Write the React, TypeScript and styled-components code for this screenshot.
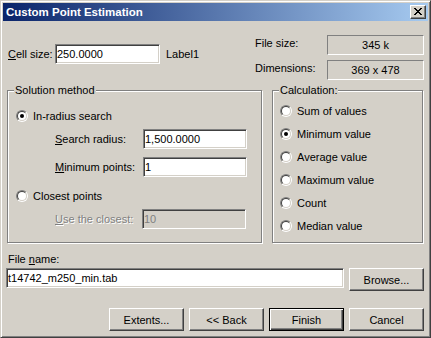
import React from "react";
import styled, { createGlobalStyle } from "styled-components";

// classic win2k palette
const FACE = "#D4D0C8";
const SHADOW = "#808080";
const DARK = "#404040";
const FONT = `"Liberation Sans", Arial, sans-serif`;

const GlobalStyle = createGlobalStyle`
    html, body {
        margin: 0;
        padding: 0;
        background: ${FACE};
    }
    body {
        font-family: ${FONT};
        font-size: 11px;
        line-height: 13px;
        color: #000;
    }
    u {
        text-decoration: underline;
    }
`;

const calcOptions = [
    { label: "Sum of values", checked: false },
    { label: "Minimum value", checked: true },
    { label: "Average value", checked: false },
    { label: "Maximum value", checked: false },
    { label: "Count", checked: false },
    { label: "Median value", checked: false },
];

const CloseGlyph = () => (
    <svg width="8" height="7" viewBox="0 0 8 7" shapeRendering="crispEdges">
        <path d="M0 0h2v1h-2z M6 0h2v1h-2z M1 1h2v1h-2z M5 1h2v1h-2z M2 2h4v1h-4z M3 3h2v1h-2z M2 4h4v1h-4z M1 5h2v1h-2z M5 5h2v1h-2z M0 6h2v1h-2z M6 6h2v1h-2z" fill="#000" />
    </svg>
);

const Radio: React.FC<{ checked?: boolean; label: string }> = ({ checked, label }) => (
    <RadioRow>
        <RadioOuter>
            <RadioInner $checked={!!checked} />
        </RadioOuter>
        <span>{label}</span>
    </RadioRow>
);

const App: React.FC = () => {
    return (
        <>
            <GlobalStyle />
            <Window>
                <TitleBar>
                    <TitleText>Custom Point Estimation</TitleText>
                    <CloseButton>
                        <CloseGlyph />
                    </CloseButton>
                </TitleBar>

                <Client>
                    <TopRow>
                        <CellField>
                            <FieldLabel $width={49} $indent={2}>
                                <u>C</u>ell size:
                            </FieldLabel>
                            <TextBox $width={105} readOnly value="250.0000" />
                            <PlainLabel>Label1</PlainLabel>
                        </CellField>
                        <InfoGrid>
                            <InfoLabel>File size:</InfoLabel>
                            <InfoBox>345 k</InfoBox>
                            <InfoLabel>Dimensions:</InfoLabel>
                            <InfoBox>369 x 478</InfoBox>
                        </InfoGrid>
                    </TopRow>

                    <GroupsRow>
                        <GroupBox $padTop={17} $padLeft={8}>
                            <Legend>Solution method</Legend>
                            <Radio checked label="In-radius search" />
                            <FieldRow $gap={5}>
                                <FieldLabel $width={88}>
                                    <u>S</u>earch radius:
                                </FieldLabel>
                                <TextBox $width={104} readOnly value="1,500.0000" />
                            </FieldRow>
                            <FieldRow $gap={8}>
                                <FieldLabel $width={88}>
                                    <u>M</u>inimum points:
                                </FieldLabel>
                                <TextBox $width={104} readOnly value="1" />
                            </FieldRow>
                            <Spacer $h={11} />
                            <Radio label="Closest points" />
                            <FieldRow $gap={5}>
                                <FieldLabel $width={87} $disabled>
                                    <u>U</u>se the closest:
                                </FieldLabel>
                                <TextBox $width={104} $disabled readOnly value="10" />
                            </FieldRow>
                        </GroupBox>

                        <GroupBox $padTop={12} $padLeft={7}>
                            <Legend>Calculation:</Legend>
                            <RadioList>
                                {calcOptions.map(o => (
                                    <Radio key={o.label} checked={o.checked} label={o.label} />
                                ))}
                            </RadioList>
                        </GroupBox>
                    </GroupsRow>

                    <FileSection>
                        <FieldLabel $indent={2}>
                            File <u>n</u>ame:
                        </FieldLabel>
                        <FileRow>
                            <TextBox $width={338} readOnly value="t14742_m250_min.tab" />
                            <Button>Browse...</Button>
                        </FileRow>
                    </FileSection>

                    <ButtonRow>
                        <Button>Extents...</Button>
                        <Button>&lt;&lt; Back</Button>
                        <Button $default>Finish</Button>
                        <Button>Cancel</Button>
                    </ButtonRow>
                </Client>
            </Window>
        </>
    );
};

const Window = styled.div`
    box-sizing: border-box;
    width: 431px;
    height: 338px;
    background: ${FACE};
    border: 1px solid;
    border-color: ${FACE} ${DARK} ${DARK} ${FACE};
    box-shadow: inset 1px 1px #fff, inset -1px -1px ${SHADOW};
    padding: 2px;
    display: flex;
    flex-direction: column;
`;

const TitleBar = styled.div`
    height: 18px;
    flex: none;
    display: flex;
    align-items: center;
    justify-content: space-between;
    padding: 0 2px 0 3px;
    background: linear-gradient(to right, #0A246A, #A6CAF0);
`;

const TitleText = styled.span`
    color: #fff;
    font-weight: bold;
    font-size: 11.5px;
`;

const CloseButton = styled.div`
    box-sizing: border-box;
    width: 16px;
    height: 14px;
    background: ${FACE};
    border: 1px solid;
    border-color: #fff ${DARK} ${DARK} #fff;
    box-shadow: inset -1px -1px ${SHADOW};
    display: flex;
    align-items: center;
    justify-content: center;
    padding: 0 1px 1px 0;
`;

const Client = styled.div`
    flex: 1;
    padding: 0 4px 0 3px;
    display: flex;
    flex-direction: column;
`;

const TopRow = styled.div`
    display: flex;
    align-items: flex-start;
    margin-top: 14px;
    height: 45px;
`;

const CellField = styled.div`
    display: flex;
    align-items: center;
    margin-top: 9px;
`;

const FieldLabel = styled.label<{ $width?: number; $indent?: number; $disabled?: boolean }>`
    box-sizing: border-box;
    display: block;
    flex: none;
    width: ${p => (p.$width ? `${p.$width}px` : "auto")};
    padding-left: ${p => p.$indent || 0}px;
    color: ${p => (p.$disabled ? SHADOW : "#000")};
    text-shadow: ${p => (p.$disabled ? "1px 1px #fff" : "none")};
`;

const PlainLabel = styled.span`
    margin-left: 6px;
`;

const TextBox = styled.input<{ $width: number; $disabled?: boolean }>`
    box-sizing: border-box;
    width: ${p => p.$width}px;
    height: 20px;
    margin: 0;
    padding: 0 1px;
    font-family: ${FONT};
    font-size: 11px;
    color: ${p => (p.$disabled ? SHADOW : "#000")};
    background: ${p => (p.$disabled ? FACE : "#fff")};
    border: 1px solid;
    border-color: ${SHADOW} #fff #fff ${SHADOW};
    box-shadow: inset 1px 1px ${DARK}, inset -1px -1px ${FACE};
    outline: none;
`;

const InfoGrid = styled.div`
    margin-left: auto;
    display: grid;
    grid-template-columns: 72px 97px;
    grid-auto-rows: 20px;
    row-gap: 5px;
`;

const InfoLabel = styled.span`
    padding-top: 2px;
`;

const InfoBox = styled.div`
    box-sizing: border-box;
    border: 1px solid;
    border-color: ${SHADOW} #fff #fff ${SHADOW};
    display: flex;
    align-items: center;
    justify-content: center;
`;

const GroupsRow = styled.div`
    display: grid;
    grid-template-columns: 255px 151px;
    column-gap: 10px;
    height: 153px;
    margin: 10px 0 0 1px;
`;

const GroupBox = styled.div<{ $padTop: number; $padLeft: number }>`
    position: relative;
    box-sizing: border-box;
    border: 1px solid ${SHADOW};
    box-shadow: inset 1px 1px #fff, 1px 1px #fff;
    padding: ${p => p.$padTop}px 0 0 ${p => p.$padLeft}px;
    display: flex;
    flex-direction: column;
`;

// sits on top of the etched frame line
const Legend = styled.span`
    position: absolute;
    top: -7px;
    left: 6px;
    padding: 0 1px;
    background: ${FACE};
`;

const RadioList = styled.div`
    display: flex;
    flex-direction: column;
    gap: 7px;
`;

const RadioRow = styled.div`
    display: flex;
    align-items: center;
    gap: 5px;
    height: 16px;
`;

const RadioOuter = styled.span`
    box-sizing: border-box;
    flex: none;
    width: 12px;
    height: 12px;
    border-radius: 50%;
    border: 1px solid;
    border-color: ${SHADOW} #fff #fff ${SHADOW};
    display: flex;
`;

const RadioInner = styled.span<{ $checked: boolean }>`
    box-sizing: border-box;
    width: 10px;
    height: 10px;
    border-radius: 50%;
    border: 1px solid;
    border-color: ${DARK} ${FACE} ${FACE} ${DARK};
    background: #fff;
    display: flex;
    align-items: center;
    justify-content: center;

    &::after {
        content: "";
        width: 4px;
        height: 4px;
        border-radius: 50%;
        background: #000;
        display: ${p => (p.$checked ? "block" : "none")};
    }
`;

const FieldRow = styled.div<{ $gap: number }>`
    display: flex;
    align-items: center;
    margin-top: ${p => p.$gap}px;
    padding-left: 39px;
`;

const Spacer = styled.div<{ $h: number }>`
    height: ${p => p.$h}px;
    flex: none;
`;

const FileSection = styled.div`
    margin-top: 10px;
    display: flex;
    flex-direction: column;
    gap: 2px;
`;

const FileRow = styled.div`
    display: flex;
    align-items: flex-start;
    gap: 5px;
`;

const ButtonRow = styled.div`
    display: flex;
    justify-content: flex-end;
    gap: 5px;
    margin-top: 17px;
`;

const Button = styled.button<{ $default?: boolean }>`
    box-sizing: border-box;
    flex: none;
    width: 75px;
    height: 23px;
    margin: 0;
    padding: 0;
    font-family: ${FONT};
    font-size: 11px;
    color: #000;
    background: ${FACE};
    border: 1px solid;
    border-color: ${p => (p.$default ? "#000" : `#fff ${DARK} ${DARK} #fff`)};
    box-shadow: ${p =>
        p.$default
            ? `inset 1px 1px #fff, inset -1px -1px ${DARK}, inset -2px -2px ${SHADOW}`
            : `inset -1px -1px ${SHADOW}`};
`;

export default App;
